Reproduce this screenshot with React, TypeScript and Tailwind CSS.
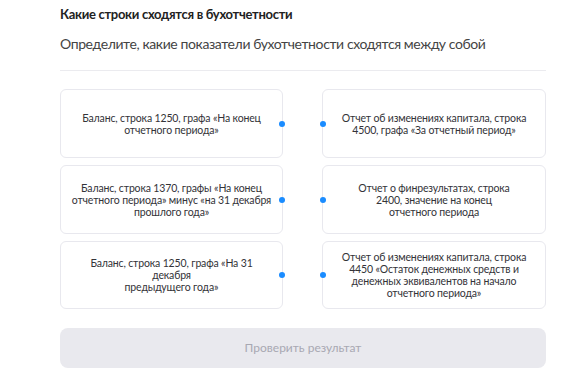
import React from "react";

const left: string[][] = [
  ["Баланс, строка 1250, графа «На конец", "отчетного периода»"],
  ["Баланс, строка 1370, графы «На конец", "отчетного периода» минус «на 31 декабря", "прошлого года»"],
  ["Баланс, строка 1250, графа «На 31", "декабря", "предыдущего года»"],
];
const right: string[][] = [
  ["Отчет об изменениях капитала, строка", "4500, графа «За отчетный период»"],
  ["Отчет о финрезультатах, строка", "2400, значение на конец", "отчетного периода"],
  ["Отчет об изменениях капитала, строка", "4450 «Остаток денежных средств и", "денежных эквивалентов на начало", "отчетного периода»"],
];

function Card({ lines, side, h }: { lines: string[]; side: "l" | "r"; h: string }) {
  return (
    <div className={`relative flex items-center justify-center rounded-[6px] border border-[#e8e8ee] bg-white ${h}`}>
      <p className="whitespace-nowrap text-center text-[10.5px] leading-[12px] tracking-[-0.15px] text-[#333338]">
        {lines.map((l, i) => (
          <React.Fragment key={i}>
            {i > 0 && <br />}
            {l}
          </React.Fragment>
        ))}
      </p>
      <span
        className={`absolute top-1/2 h-[6px] w-[6px] -translate-y-1/2 rounded-full bg-[#1a8cff] ${
          side === "l" ? "right-[-3px]" : "left-[-3px]"
        }`}
      />
    </div>
  );
}

export default function App() {
  const heights = ["h-[69px]", "h-[69px]", "h-[68px]"];
  return (
    <div className="min-h-[375px] w-[586px] bg-white" style={{ fontFamily: "Lato, 'Noto Sans', sans-serif" }}>
      <div className="ml-[60px] w-[486px] pt-[5px]">
        <div className="text-[13px] font-bold leading-[18px] tracking-[-0.3px] text-[#222]">
          Какие строки сходятся в бухотчетности
        </div>
        <div className="mt-[11px] whitespace-nowrap text-[14px] leading-[20px] tracking-[-0.4px] text-[#444]">
          Определите, какие показатели бухотчетности сходятся между собой
        </div>
        <div className="mt-[16px] h-px bg-[#ebebef]" />
        <div className="mt-[18px] grid grid-cols-[223px_224px] gap-x-[39px] gap-y-[7px]">
          {[0, 1, 2].map((i) => (
            <React.Fragment key={i}>
              <Card lines={left[i]} side="l" h={heights[i]} />
              <Card lines={right[i]} side="r" h={heights[i]} />
            </React.Fragment>
          ))}
        </div>
        <button className="mt-[19px] flex h-[40px] w-full items-center justify-center rounded-[8px] bg-[#e9e9ee] text-[12px] text-[#a8a8b2]">
          Проверить результат
        </button>
      </div>
    </div>
  );
}
